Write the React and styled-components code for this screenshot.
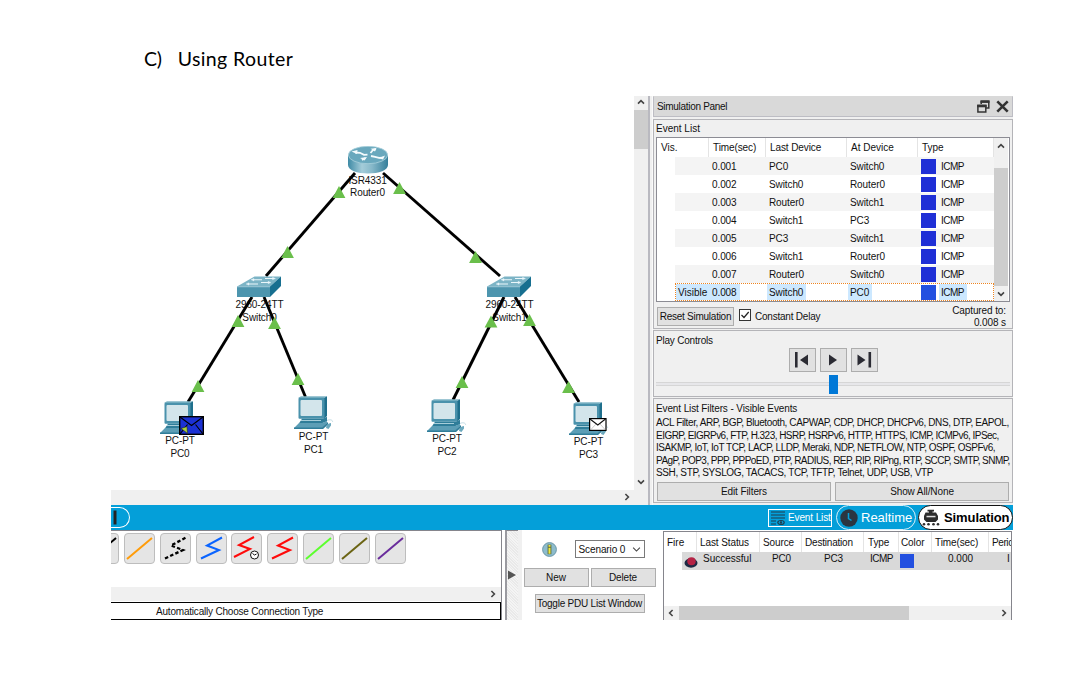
import React from "react";
import styled, { createGlobalStyle } from "styled-components";

const Global = createGlobalStyle`
  * { box-sizing: border-box; }
  body { margin: 0; background: #fff; font-family: "Liberation Sans", Arial, sans-serif; font-size: 10px; color: #111; }
  svg { display: block; flex: none; }
`;

const Page = styled.main`
  width: 1090px;
  height: 688px;
  overflow: hidden;
  padding: 45px 0 0 111px;
`;
const Heading = styled.h1`
  display: flex;
  gap: 16px;
  margin: 0 0 23px;
  padding-left: 33px;
  height: 28px;
  font: 400 19.5px/28px Lato, sans-serif;
  color: #000;
`;
const HeadText = styled.span`
  letter-spacing: ${(p) => p.$ls || 0}px;
`;
const Text = styled.span`
  white-space: nowrap;
  letter-spacing: ${(p) => p.$ls || 0}px;
`;

/* Window frame */
const Frame = styled.section`
  width: 902px;
  height: 524px;
  display: flex;
  flex-direction: column;
  overflow: hidden;
`;
const Upper = styled.div`
  display: flex;
  height: 409px;
  background: #f0f0f0;
`;
const Workspace = styled.div`
  width: 537px;
  display: flex;
  flex-direction: column;
`;
const CanvasRow = styled.div`
  display: flex;
  height: 394px;
`;
const Canvas = styled.div`
  position: relative;
  width: 523px;
  background: #fff;
`;
const Wires = styled.svg`
  position: absolute;
  left: 0;
  top: 0;
`;
const Device = styled.div`
  position: absolute;
  left: ${(p) => p.$x - 111}px;
  top: ${(p) => p.$y - 96}px;
`;
const Label = styled.div`
  position: absolute;
  left: ${(p) => p.$x - 151}px;
  top: ${(p) => p.$y - 96}px;
  width: 80px;
  text-align: center;
  line-height: ${(p) => p.$lh || 13}px;
  letter-spacing: -0.1px;
`;
const VScroll = styled.div`
  width: 14px;
  height: ${(p) => p.$h}px;
  display: flex;
  flex-direction: column;
  align-items: center;
  background: #f0f0f0;
  padding: ${(p) => p.$pt || 0}px 0 ${(p) => p.$pb || 0}px;
`;
const Thumb = styled.i`
  width: 100%;
  height: ${(p) => p.$h}px;
  margin: ${(p) => p.$mt || 0}px 0 auto;
  background: #cdcdcd;
`;
const HScroll = styled.div`
  display: flex;
  align-items: center;
  justify-content: flex-end;
  height: ${(p) => p.$h}px;
  padding-right: ${(p) => p.$pr}px;
  background: #f0f0f0;
`;
const Split = styled.div`
  width: 5px;
  border-left: 2px solid #b9b9c0;
  border-right: 1px solid #fafafa;
`;

/* Simulation panel */
const Panel = styled.aside`
  width: 360px;
  display: flex;
  flex-direction: column;
`;
const TitleBar = styled.header`
  height: 21px;
  padding: 0 3px;
  margin-bottom: 2px;
  display: flex;
  align-items: center;
  justify-content: space-between;
  background: #d9d9d9;
  border: 1px solid #bdbdc4;
  border-top-color: #d9d9d9;
`;
const TitleIcons = styled.div`
  display: flex;
  gap: 6px;
`;
const Group = styled.section`
  height: ${(p) => p.$h}px;
  margin-bottom: 1px;
  border: 1px solid #b4b4b8;
  padding: 0 2px;
`;
const GroupTitle = styled.h2`
  margin: 0;
  font: inherit;
  height: 17px;
  line-height: ${(p) => p.$lh || 18}px;
  letter-spacing: ${(p) => p.$ls || 0}px;
`;
const EventTable = styled.div`
  width: 354px;
  height: 165px;
  display: flex;
  border: 1px solid #8c8c94;
  background: #fff;
`;
const EventGrid = styled.div`
  width: 337px;
`;
const EventHead = styled.div`
  display: grid;
  grid-template-columns: 52px 57px 81px 71px 76px;
  height: 19px;
  line-height: 20px;
`;
const HeadCell = styled.span`
  white-space: nowrap;
  overflow: hidden;
  padding-left: ${(p) => p.$pl ?? 4}px;
  letter-spacing: ${(p) => p.$ls || 0}px;
  border-right: ${(p) => (p.$last ? 0 : 1)}px solid #e4e4e4;
`;
const EventRow = styled.div`
  display: grid;
  grid-template-columns: 35px 57px 81px 70px 76px;
  margin-left: 18px;
  width: 319px;
  height: 18px;
  line-height: 18px;
  background: ${(p) => (p.$odd ? "#fff" : "#f4f4f4")};
  outline: ${(p) => (p.$sel ? "1px dotted #ee8420" : "none")};
  outline-offset: -1px;
`;
const Cell = styled.span`
  display: flex;
  align-items: center;
  white-space: nowrap;
`;
const Value = styled.span`
  padding: 0 ${(p) => p.$pr ?? 3}px 0 2px;
  margin-left: ${(p) => p.$ml || 0}px;
  height: 16px;
  line-height: 17px;
  letter-spacing: ${(p) => p.$ls ?? -0.1}px;
  background: ${(p) => (p.$sel ? "#cce8ff" : "transparent")};
`;
const Swatch = styled.i`
  display: block;
  width: ${(p) => p.$w || 15}px;
  height: ${(p) => p.$w || 15}px;
  margin-left: ${(p) => p.$ml || 0}px;
  background: ${(p) => p.$c || "#1f2fd6"};
`;
const EventFoot = styled.div`
  display: flex;
  align-items: center;
  padding: 2px 0 0 1px;
  height: 26px;
`;
const Button = styled.button`
  font: inherit;
  color: inherit;
  width: ${(p) => p.$w}px;
  height: ${(p) => p.$h || 19}px;
  flex: none;
  padding: 0;
  display: flex;
  align-items: center;
  justify-content: center;
  white-space: nowrap;
  letter-spacing: ${(p) => p.$ls || 0}px;
  background: #e1e1e1;
  border: 1px solid #adadad;
`;
const Toggle = styled(Button)`
  margin-top: 7px;
`;
const Check = styled.span`
  width: 12px;
  height: 12px;
  margin: 0 4px 2px 5px;
  border: 1px solid #333;
  background: #fff;
`;
const Captured = styled.div`
  margin-left: auto;
  padding: 1px 4px 0 0;
  text-align: right;
  line-height: 12px;
  letter-spacing: -0.1px;
`;
const Buttons = styled.div`
  display: flex;
  gap: ${(p) => p.$gap || 4}px;
  justify-content: center;
`;
const Slider = styled.div`
  height: 21px;
  margin-top: 2px;
  display: flex;
  align-items: center;
  justify-content: center;
  background: linear-gradient(#d6d6d6, #d6d6d6) 0 8px / 100% 1px no-repeat,
    linear-gradient(#e7e7ea, #e7e7ea) 0 9px / 100% 2px no-repeat,
    linear-gradient(#d6d6d6, #d6d6d6) 0 11px / 100% 1px no-repeat;
`;
const Knob = styled.i`
  width: 9px;
  height: 19px;
  background: #0078d7;
`;
const FilterList = styled.div`
  height: 64px;
  margin-bottom: 2px;
`;
const FilterLine = styled.div`
  height: 12.6px;
  line-height: 13px;
  white-space: nowrap;
  letter-spacing: ${(p) => p.$ls}px;
`;

/* Blue mode bar */
const ModeBar = styled.nav`
  height: 25px;
  display: flex;
  align-items: center;
  background: #049fd9;
`;
const StepPill = styled.div`
  width: 19px;
  height: 21px;
  margin-right: auto;
  border: 1px solid #fff;
  border-left: 0;
  border-radius: 0 11px 11px 0;
`;
const EventListButton = styled.div`
  width: 64px;
  height: 18px;
  display: flex;
  align-items: center;
  gap: 3px;
  padding-left: 2px;
  border: 1px solid #fff;
  color: #fff;
`;
const ModePill = styled.div`
  width: ${(p) => p.$w}px;
  height: 25px;
  margin-left: ${(p) => p.$ml}px;
  padding-left: ${(p) => p.$pl}px;
  display: flex;
  align-items: center;
  gap: ${(p) => p.$gap}px;
  border-radius: 13px;
  border: 1px solid ${(p) => (p.$on ? "#111" : "#d9f0fa")};
  background: ${(p) => (p.$on ? "#fff" : "transparent")};
  color: ${(p) => (p.$on ? "#000" : "#fff")};
  font-size: 13px;
  font-weight: ${(p) => (p.$on ? 700 : 400)};
`;

/* Lower area */
const Lower = styled.div`
  display: flex;
  height: 90px;
  background: #fff;
`;
const Connections = styled.div`
  width: 391px;
  border-top: 1px solid #85858c;
  border-right: 1px solid #85858c;
  display: flex;
  flex-direction: column;
`;
const Tiles = styled.div`
  display: flex;
  gap: 4.86px;
  height: 56px;
  padding-top: 2px;
  overflow: hidden;
`;
const Tile = styled.div`
  width: 31px;
  height: 31px;
  flex: none;
  margin-left: ${(p) => (p.$first ? -23 : 0)}px;
  border: 1px solid #bdbdbd;
  border-radius: 4px;
  background: #e5e5e5;
`;
const ConnectionName = styled.div`
  height: 18px;
  margin-top: auto;
  border: 1px solid #000;
  border-left: 0;
  padding-left: 45px;
  line-height: 17px;
  letter-spacing: -0.2px;
`;
const Handle = styled.div`
  width: 13px;
  margin-left: 3px;
  border-top: 1px solid #85858c;
  border-left: 2px solid #9a9aa0;
  background: repeating-linear-gradient(45deg, #f4f4f4 0 1px, #e9e9e9 1px 2px);
  display: flex;
  align-items: center;
  padding: 0 0 2px 1px;
`;
const Scenario = styled.div`
  width: 145px;
  padding: 10px 8px 0 2px;
  display: flex;
  flex-direction: column;
  align-items: center;
  border-left: 4px solid #f0f0f0;
`;
const ScenarioRow = styled.div`
  display: flex;
  align-items: center;
  gap: 18px;
  margin-bottom: 10px;
  padding-left: 7px;
`;
const Select = styled.div`
  width: 70px;
  height: 18px;
  padding: 0 3px;
  display: flex;
  align-items: center;
  justify-content: space-between;
  border: 1px solid #7a7a7a;
`;
const PduTable = styled.div`
  width: 349px;
  margin-top: 1px;
  display: flex;
  flex-direction: column;
  border: solid #85858c;
  border-width: 1px 1px 0 1px;
`;
const PduRow = styled.div`
  display: grid;
  grid-template-columns: 33px 63px 42px 62px 35px 33px 57px 22px;
  height: 20px;
  line-height: 21px;
`;
const PduBody = styled(PduRow)`
  grid-template-columns: 14px 63px 42px 62px 35px 33px 57px 22px;
  margin-left: 18px;
  height: 18px;
  line-height: 13px;
  background: #d9d9d9;
`;
const PduCell = styled.span`
  white-space: nowrap;
  overflow: ${(p) => (p.$open ? "visible" : "hidden")};
  padding-left: ${(p) => p.$pl || 0}px;
  padding-top: ${(p) => p.$pt || 0}px;
  letter-spacing: ${(p) => p.$ls || 0}px;
`;
const PduScroll = styled.div`
  margin-top: auto;
  height: 14px;
  display: flex;
  align-items: center;
  justify-content: space-between;
  padding: 0 3px 0 3px;
  background: #f0f0f0;
`;
const HThumb = styled.i`
  width: 230px;
  height: 14px;
  margin-right: 87px;
  background: #cdcdcd;
`;

const arrows = {
  up: "M1 5.600 4 2.600 7 5.600",
  down: "M1 2.400 4 5.400 7 2.400",
  right: "M2.400 1 5.400 4 2.400 7",
  left: "M5.600 1 2.600 4 5.600 7",
};
const Chevron = ({ d, w = 8, h = 8, c = "#444", s = 1.6 }) => (
  <svg width={w} height={h} viewBox="0 0 8 8" fill="none" stroke={c} strokeWidth={s}>
    <path d={arrows[d]} />
  </svg>
);

const Router = () => (
  <svg width="40" height="28" viewBox="0 0 40 28">
    <defs>
      <linearGradient id="rb" x1="0" x2="1">
        <stop offset="0" stopColor="#3e8aa5" /><stop offset=".35" stopColor="#a4ccd9" />
        <stop offset=".6" stopColor="#86b8c9" /><stop offset="1" stopColor="#357f9b" />
      </linearGradient>
    </defs>
    <path d="M0 9v10c0 5 9 8.500 20 8.500S40 24 40 19V9z" fill="url(#rb)" />
    <ellipse cx="20" cy="9" rx="19.700" ry="8.700" fill="#69a8bd" stroke="#a9d0dc" strokeWidth=".8" />
    <g stroke="#f4fbfd" strokeWidth="1.800" fill="none">
      <path d="M7 6.500l5 .3 4 2 3.500-.2M22.500 7l2.500-3 3-.8M23 10l4 .8 4 1 4-.2M14 14l3.500-2" />
    </g>
    <path d="M28.500 2l-6 .8 4.500 2.700zM12 12l7-1-2.500 3.500zM3.500 5.500l6-1.500-.5 4zM37 9.500l-2 4-4.500-1.200z" fill="#f4fbfd" />
  </svg>
);

const Switch = () => (
  <svg width="45" height="22" viewBox="0 0 45 22">
    <path d="M0 10.500 17.500.5H44L33 10.500z" fill="#7cb4c6" />
    <path d="M0 10.500h33V21H0z" fill="#4d95ae" />
    <path d="M33 10.500 44 .5v9.500L33 21z" fill="#176f90" />
    <path d="M0 10.800h33" stroke="#9cc8d6" strokeWidth=".8" />
    <g stroke="#eaf6fa" strokeWidth="1.100" fill="#eaf6fa">
      <path d="M16 3.800h9M28 2.500h8M11 8h10M24 6.500h8" fill="none" />
      <path d="M17 2.500l-3 1.300 3 1.200zM35.500 1.200l3 1.300-3 1.300zM12 6.700l-3 1.300 3 1.300zM31 5.200l3 1.300-3 1.300z" strokeWidth=".3" />
    </g>
  </svg>
);

const Pc = () => (
  <svg width="40" height="34" viewBox="0 0 40 34">
    <path d="M4 2 7 .3h26L30 2z" fill="#7fb4c6" />
    <path d="M30 2 33 .3V20l-3 3z" fill="#1f6f8c" />
    <rect x="4.500" y="1.800" width="26" height="21" rx="1" fill="#4a92ac" />
    <rect x="6.500" y="4" width="21.500" height="16" rx="1" fill="#d3e5eb" />
    <path d="M8 22.800h21l4-2v4.500l-5 2H5z" fill="#2f7d99" />
    <path d="M7 24.500h20" stroke="#a6cdd9" strokeWidth="1" />
    <path d="M5 27h23l5-2v2l-5 5H0z" fill="#5c9eb6" />
    <path d="M0 31.500H28L34 26v2.500L29 33H0z" fill="#2f7d99" />
    <path d="M32 32c0-3 2-4.500 5-5v2.500L34.500 33z" fill="#6ba8bd" />
    <path d="M33 24.500c3-1.500 6-.5 5.500 1.500" fill="none" stroke="#c4dde6" strokeWidth="1" />
  </svg>
);

const Triangle = ({ x, y }) => <path d={`M${x} ${y}l6.400 12h-12.800z`} fill="#6abf4b" />;

const links = [
  [355, 173, 266, 276], [383, 173, 500, 276],
  [252, 297, 188, 402], [264, 297, 305.5, 397],
  [504, 297, 453, 400], [515, 297, 579, 402],
];
const marks = [
  [339, 186], [399.5, 182], [287.5, 246], [475.5, 251], [238, 315], [274.5, 317],
  [198, 380], [298, 373], [491, 315.5], [529.5, 314], [462, 376], [568.5, 381],
];
const labels = [
  [367.5, 175, "ISR4331", "Router0", 12], [259.5, 298, "2960-24TT", "Switch0"], [509.5, 298, "2960-24TT", "Switch1"],
  [180, 434, "PC-PT", "PC0"], [313.5, 430, "PC-PT", "PC1"], [447, 432, "PC-PT", "PC2"], [588.5, 435, "PC-PT", "PC3"],
];
const pcs = [[160, 400.5], [294, 396], [427, 398.5], [569, 401.5]];

const Topology = () => (
  <Canvas>
    {labels.map(([x, y, a, b, lh]) => (
      <Label key={b} $x={x} $y={y} $lh={lh}>{a}<br />{b}</Label>
    ))}
    <Wires width="523" height="394" viewBox="111 96 523 394">
      {links.map((l) => <path key={l.join()} d={`M${l[0]} ${l[1]}L${l[2]} ${l[3]}`} stroke="#000" strokeWidth="2.900" />)}
      {marks.map(([x, y]) => <Triangle key={x + "," + y} x={x} y={y} />)}
    </Wires>
    <Device $x={348} $y={146}><Router /></Device>
    <Device $x={237} $y={276}><Switch /></Device>
    <Device $x={487} $y={276}><Switch /></Device>
    {pcs.map(([x, y]) => <Device key={x} $x={x} $y={y}><Pc /></Device>)}
    <Device $x={179} $y={416}>
      <svg width="25" height="19" viewBox="0 0 25 19">
        <rect x=".7" y=".7" width="23.600" height="17.600" fill="#1b31d4" stroke="#000" strokeWidth="1.400" />
        <path d="M1 1l11.500 8.500L24 1M1 18l7.500-9.500M24 18l-7.500-9.500" fill="none" stroke="#000" strokeWidth="1.100" />
        <path d="M2 12.500l6-2 .5 7-2.500-2z" fill="#a9d13c" stroke="#222" strokeWidth=".6" />
      </svg>
    </Device>
    <Device $x={589} $y={418}>
      <svg width="18" height="13" viewBox="0 0 18 13">
        <rect x=".6" y=".6" width="16.400" height="11.800" fill="#fff" stroke="#000" strokeWidth="1.200" />
        <path d="M1 1l7.800 6L16.500 1" fill="none" stroke="#111" strokeWidth="1.100" />
        <path d="M1.500 12l5.500-6M16.500 12l-5.500-6" stroke="#999" strokeWidth=".5" />
      </svg>
    </Device>
  </Canvas>
);

const events = [
  ["", "0.001", "PC0", "Switch0"], ["", "0.002", "Switch0", "Router0"], ["", "0.003", "Router0", "Switch1"],
  ["", "0.004", "Switch1", "PC3"], ["", "0.005", "PC3", "Switch1"], ["", "0.006", "Switch1", "Router0"],
  ["", "0.007", "Router0", "Switch0"], ["Visible", "0.008", "Switch0", "PC0"],
];
const filters = [
  ["ACL Filter, ARP, BGP, Bluetooth, CAPWAP, CDP, DHCP, DHCPv6, DNS, DTP, EAPOL,", -0.4],
  ["EIGRP, EIGRPv6, FTP, H.323, HSRP, HSRPv6, HTTP, HTTPS, ICMP, ICMPv6, IPSec,", -0.53],
  ["ISAKMP, IoT, IoT TCP, LACP, LLDP, Meraki, NDP, NETFLOW, NTP, OSPF, OSPFv6,", -0.46],
  ["PAgP, POP3, PPP, PPPoED, PTP, RADIUS, REP, RIP, RIPng, RTP, SCCP, SMTP, SNMP,", -0.54],
  ["SSH, STP, SYSLOG, TACACS, TCP, TFTP, Telnet, UDP, USB, VTP", -0.36],
];

const PlayIcon = ({ kind }) => (
  <svg width="18" height="16" viewBox="0 0 18 16" fill="#2b2b33">
    {kind === "back" && <path d="M2 0h2.600v15.500H2zM15 2.500v11L7 8z" />}
    {kind === "play" && <path d="M5 2.500v11L13 8z" />}
    {kind === "next" && <path d="M13.500 0h2.600v15.500h-2.600zM2.500 2.500v11L10.500 8z" />}
  </svg>
);

const SimulationPanel = () => (
  <Panel>
    <TitleBar>
      <Text $ls={-0.3}>Simulation Panel</Text>
      <TitleIcons>
        <svg width="13" height="13" viewBox="0 0 13 13" fill="none" stroke="#333">
          <path d="M4.200 4V1.500h7.600v6.500h-3" strokeWidth="1.500" /><path d="M3.500 1.600h9" strokeWidth="2.600" />
          <rect x=".9" y="5.500" width="7.900" height="6.500" strokeWidth="1.500" /><path d="M.2 6h9.400" strokeWidth="2.600" />
        </svg>
        <svg width="13" height="13" viewBox="0 0 12 12" stroke="#333" strokeWidth="2.400"><path d="M1.200 1.200l9.600 9.600M10.800 1.200L1.200 10.800" /></svg>
      </TitleIcons>
    </TitleBar>
    <Group $h={210}>
      <GroupTitle>Event List</GroupTitle>
      <EventTable>
        <EventGrid>
          <EventHead>
            <HeadCell>Vis.</HeadCell><HeadCell $ls={-0.1}>Time(sec)</HeadCell><HeadCell $ls={-0.1}>Last Device</HeadCell>
            <HeadCell>At Device</HeadCell><HeadCell>Type</HeadCell>
          </EventHead>
          {events.map(([vis, time, last, at], i) => {
            const sel = i === 7;
            return (
              <EventRow key={time} $odd={i % 2 === 1} $sel={sel}>
                <Cell><Value $sel={sel} $ml={1} $pr={5} $ls={0}>{vis}</Value></Cell>
                <Cell><Value $sel={sel}>{time}</Value></Cell>
                <Cell><Value $sel={sel}>{last}</Value></Cell>
                <Cell><Value $sel={sel}>{at}</Value></Cell>
                <Cell><Swatch $ml={3} $c={sel ? "#2350e0" : undefined} /><Value $sel={sel} $ml={3} $ls={-0.5}>ICMP</Value></Cell>
              </EventRow>
            );
          })}
        </EventGrid>
        <VScroll $h={163} $pt={4} $pb={3}>
          <Chevron d="up" />
          <Thumb $h={118} $mt={18} />
          <Chevron d="down" />
        </VScroll>
      </EventTable>
      <EventFoot>
        <Button $w={77} $ls={-0.26}>Reset Simulation</Button>
        <Check>
          <svg width="10" height="10" viewBox="0 0 10 10" fill="none" stroke="#222" strokeWidth="1.200"><path d="M1.500 5l2.500 2.500L8.700 2" /></svg>
        </Check>
        <Text $ls={-0.22}>Constant Delay</Text>
        <Captured>Captured to:<br />0.008 s</Captured>
      </EventFoot>
    </Group>
    <Group $h={67}>
      <GroupTitle $lh={20} $ls={-0.2}>Play Controls</GroupTitle>
      <Buttons>
        <Button $w={27} $h={24} aria-label="Back"><PlayIcon kind="back" /></Button>
        <Button $w={27} $h={24} aria-label="Play"><PlayIcon kind="play" /></Button>
        <Button $w={27} $h={24} aria-label="Forward"><PlayIcon kind="next" /></Button>
      </Buttons>
      <Slider><Knob /></Slider>
    </Group>
    <Group $h={105}>
      <GroupTitle $lh={20} $ls={-0.12}>Event List Filters - Visible Events</GroupTitle>
      <FilterList>
        {filters.map(([t, ls]) => <FilterLine key={t} $ls={ls}>{t}</FilterLine>)}
      </FilterList>
      <Buttons>
        <Button $w={174} $ls={-0.1}>Edit Filters</Button>
        <Button $w={174} $ls={-0.1}>Show All/None</Button>
      </Buttons>
    </Group>
  </Panel>
);

const cables = [
  ["#000", "line"], ["#ff9c0a", "line"], ["#000", "dash"], ["#0a64ff", "zig"], ["#ff0a0a", "clock"],
  ["#ff0a0a", "zig"], ["#5cff2e", "line"], ["#6b6414", "line"], ["#6a2d9c", "line"],
];
const Cable = ({ c, kind }) => (
  <svg width="29" height="29" viewBox="0 0 29 29" fill="none" stroke={c} strokeWidth="2">
    {kind === "line" && <path d="M2 25 27 4" />}
    {kind === "zig" && <path d="M4 24.500 22 16 10 11.500 25 3.500" />}
    {kind === "dash" && <path d="M4 24.500 22 16 10 11.500 25 3.500" strokeDasharray="3.500 2.200" strokeWidth="2.300" />}
    {kind === "clock" && <path d="M2 23 18 15 7 11 22 3" />}
    {kind === "clock" && <g stroke="#111" strokeWidth="1"><circle cx="22.500" cy="21" r="4" fill="#fff" /><path d="M20.500 19.500l2 1.500 2-1" /></g>}
  </svg>
);

export default function App() {
  return (
    <Page>
      <Global />
      <Heading><HeadText $ls={-0.3}>C)</HeadText><HeadText $ls={0.4}>Using Router</HeadText></Heading>
      <Frame>
        <Upper>
          <Workspace>
            <CanvasRow>
              <Topology />
              <VScroll $h={394} $pt={2} $pb={4}>
                <Chevron d="up" />
                <Thumb $h={39} $mt={4} />
                <Chevron d="down" />
              </VScroll>
            </CanvasRow>
            <HScroll $h={14} $pr={17}><Chevron d="right" /></HScroll>
          </Workspace>
          <Split />
          <SimulationPanel />
        </Upper>
        <ModeBar>
          <StepPill>
            <svg width="10" height="19" viewBox="0 0 10 19"><path d="M2.500 2.500h3v14h-3z" fill="#222" /></svg>
          </StepPill>
          <EventListButton>
            <svg width="14" height="14" viewBox="0 0 14 14" stroke="#1f3d4d" fill="none" strokeWidth="1.200">
              <path d="M0 1h14M0 4h14M0 7h14M0 10h5M0 13h5" /><ellipse cx="10" cy="11.500" rx="3.200" ry="2" /><circle cx="10" cy="11.500" r=".6" />
            </svg>
            <Text $ls={-0.12}>Event List</Text>
          </EventListButton>
          <ModePill $w={80} $ml={4} $pl={3} $gap={3}>
            <svg width="18" height="18" viewBox="0 0 18 18"><circle cx="9" cy="9" r="8.700" fill="#2b3540" /><path d="M8.500 4v5.500l3 2" fill="none" stroke="#049fd9" strokeWidth="1.500" /></svg>
            <Text>Realtime</Text>
          </ModePill>
          <ModePill $on $w={95} $ml={2} $pl={3} $gap={4}>
            <svg width="18" height="17" viewBox="0 0 18 17" fill="#2c2c2c">
              <path d="M5.500.8h6.500v1.700h-1.500v1h3.500L16 7v3.500l-2.500 2.500h-9L2 10.500V7l1.500-3.500H7v-1H5.500z" />
              <path d="M4.500 6.800h9v1.500h-9z" fill="#ddd" />
              <circle cx="2" cy="15.200" r="1.300" /><circle cx="6.500" cy="15.200" r="1.300" /><circle cx="11.500" cy="15.200" r="1.300" /><circle cx="16" cy="15.200" r="1.300" />
            </svg>
            <Text $ls={-0.1}>Simulation</Text>
          </ModePill>
        </ModeBar>
        <Lower>
          <Connections>
            <Tiles>
              {cables.map(([c, k], i) => <Tile key={i} $first={i === 0}><Cable c={c} kind={k} /></Tile>)}
            </Tiles>
            <HScroll $h={14} $pr={4}><Chevron d="right" /></HScroll>
            <ConnectionName>Automatically Choose Connection Type</ConnectionName>
          </Connections>
          <Handle><svg width="8" height="10" viewBox="0 0 8 10"><path d="M0 .5v9L8 5z" fill="#555" /></svg></Handle>
          <Scenario>
            <ScenarioRow>
              <svg width="15" height="15" viewBox="0 0 15 15">
                <circle cx="7.500" cy="7.500" r="6.900" fill="#8dbccc" stroke="#6d98a8" />
                <path d="M7.500 2.600v9.600" stroke="#5b6b40" strokeWidth="3.800" fill="none" />
                <path d="M7.500 5.800v5.900M7.500 3v1.800" stroke="#f2ea3c" strokeWidth="2" fill="none" />
              </svg>
              <Select><Text $ls={-0.1}>Scenario 0</Text><Chevron d="down" w={9} h={9} s={1} /></Select>
            </ScenarioRow>
            <Buttons $gap={2}><Button $w={65}>New</Button><Button $w={65} $ls={-0.15}>Delete</Button></Buttons>
            <Toggle $w={110} $ls={-0.22}>Toggle PDU List Window</Toggle>
          </Scenario>
          <PduTable>
            <PduRow>
              <HeadCell $pl={3}>Fire</HeadCell><HeadCell $pl={3} $ls={-0.1}>Last Status</HeadCell><HeadCell $pl={3} $ls={-0.1}>Source</HeadCell>
              <HeadCell $pl={3} $ls={-0.2}>Destination</HeadCell><HeadCell $pl={4} $ls={-0.1}>Type</HeadCell><HeadCell $pl={2} $ls={-0.1}>Color</HeadCell>
              <HeadCell $pl={3} $ls={-0.1}>Time(sec)</HeadCell><HeadCell $last $pl={3} $ls={-0.4}>Peric</HeadCell>
            </PduRow>
            <PduBody>
              <PduCell $open $pt={4} $pl={2}>
                <svg width="14" height="12" viewBox="0 0 14 12"><ellipse cx="7" cy="7" rx="6.500" ry="4.700" fill="#1d2a44" /><ellipse cx="7.500" cy="5.300" rx="4.200" ry="4" fill="#b52345" /></svg>
              </PduCell>
              <PduCell $pl={7}>Successful</PduCell><PduCell $pl={13} $ls={-0.2}>PC0</PduCell><PduCell $pl={23} $ls={-0.2}>PC3</PduCell>
              <PduCell $pl={7} $ls={-0.5}>ICMP</PduCell><PduCell $pl={2} $pt={2}><Swatch $w={14} $c="#2350e0" /></PduCell>
              <PduCell $pl={17}>0.000</PduCell><PduCell $pl={19}>I</PduCell>
            </PduBody>
            <PduScroll><Chevron d="left" /><HThumb /><Chevron d="right" /></PduScroll>
          </PduTable>
        </Lower>
      </Frame>
    </Page>
  );
}
